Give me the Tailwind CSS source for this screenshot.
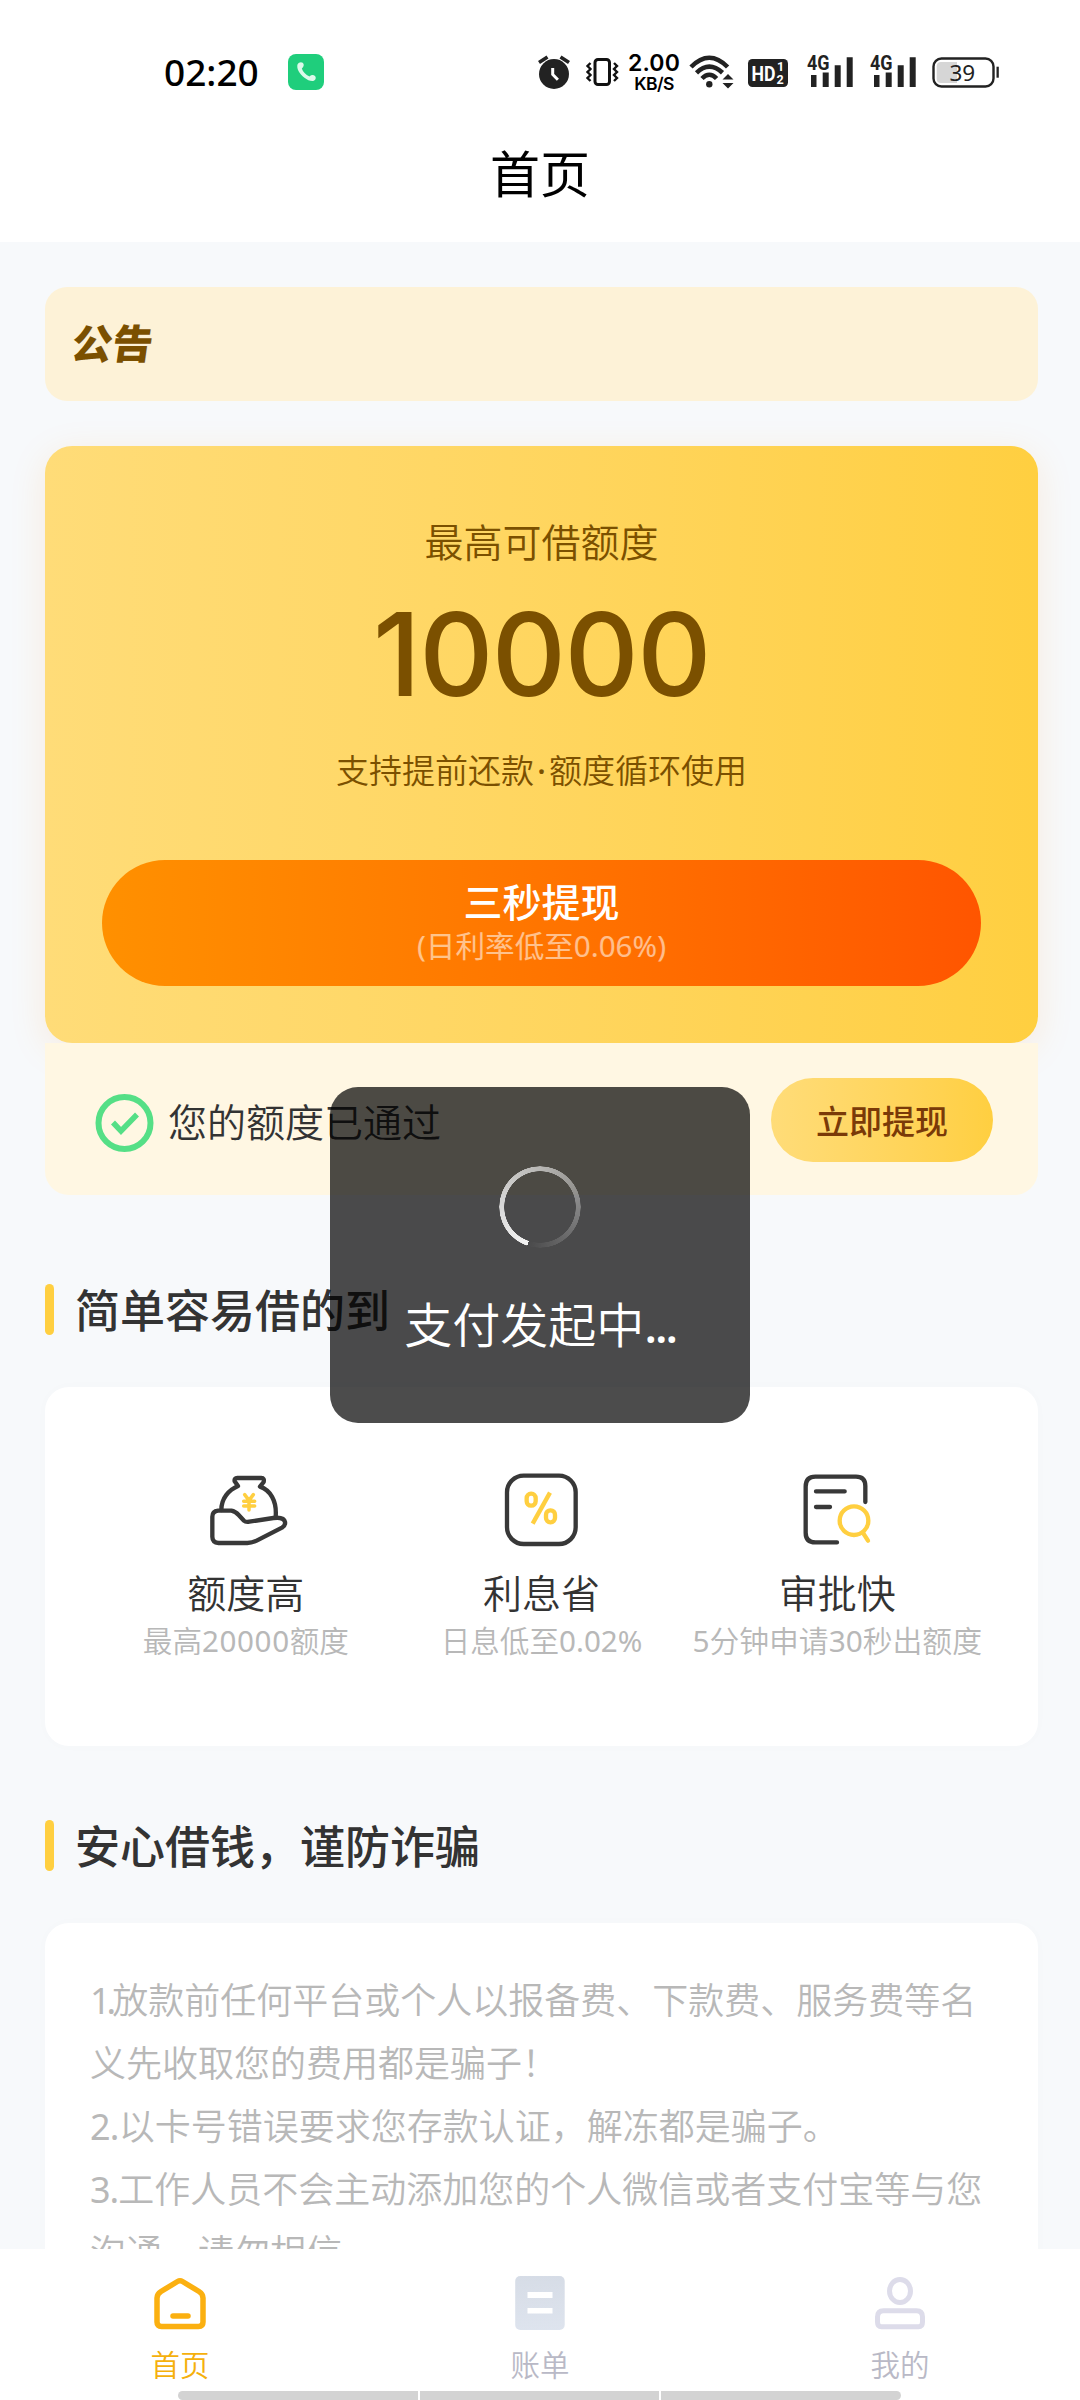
<!DOCTYPE html>
<html lang="zh-CN">
<head>
<meta charset="utf-8">
<title>首页</title>
<script src="https://cdn.jsdelivr.net/npm/@tailwindcss/browser@4"></script>
</head>
<body class="bg-[#f7f9fb]">
<div class="relative flex h-[2400px] w-[1080px] flex-col overflow-hidden bg-[#f7f9fb] font-['Noto_Sans','Noto_Sans_CJK_SC',sans-serif] font-[350] text-[#333]">

  <header class="h-[242px] shrink-0 bg-white text-black">
    <!-- status bar -->
    <div class="flex h-[144px] items-center pl-[164px]">
      <span class="mb-[2px] w-[124px] text-[37px] leading-none font-medium">02:20</span>
      <svg class="size-9" viewBox="0 0 36 36"><rect width="36" height="36" rx="8" fill="#1fce7c"/><path d="M9.500 10.500C11 7.500 15 7.300 15.700 10.500C16 12 14.800 13.500 13.800 14.500C15 18 17.500 20.500 21.500 22.500C23 20.800 25.500 20.500 27 22C28.600 23.800 27.500 26.500 25 27C20 27.500 13 22 10.500 17C9.300 14.500 9 12 9.500 10.500Z" fill="#dcf9ea"/></svg>
      <div class="ml-[212px] flex h-10 items-start text-[#222]">
        <svg class="h-10 w-9" viewBox="0 0 36 40"><circle cx="18" cy="22" r="15" fill="#222"/><path d="M3 10.500 11.500 5M24.500 5 33 10.500" stroke="#222" stroke-width="3.600" fill="none"/><path d="M16.700 16v6.500l5.200 5.300" stroke="#fff" stroke-width="3" fill="none"/></svg>
        <svg class="ml-3 h-10 w-9" viewBox="0 0 36 40" fill="none" stroke="#111"><rect x="11" y="7.500" width="14.500" height="25" rx="3" stroke-width="3"/><path d="M6.500 11 3.500 14l3 3-3 3 3 3-3 3 3 3M30 11l3 3-3 3 3 3-3 3 3 3-3 3" stroke-width="2.400"/></svg>
        <div class="ml-1.5 flex w-[56px] flex-col items-center font-[Inter] text-black">
          <span class="text-[23px] leading-[23px] font-semibold tracking-[0.2px]">2.00</span>
          <span class="text-[17.500px] leading-[17px] font-semibold tracking-[-0.6px]">KB/S</span>
        </div>
        <svg class="ml-1.5 h-10 w-[46px]" viewBox="0 0 46 40"><g fill="none" stroke="#222" stroke-width="4.600"><path d="M3 15Q21.300-3.500 39.600 15"/><path d="M8.500 20.800Q21.300 8.500 34.500 20.800"/><path d="M14 26.500Q21.300 19 28.600 26.500"/></g><circle cx="21.300" cy="32.300" r="3.200" fill="#222"/><path d="M34.500 27.500 40 22l5.500 5.500zM34.500 31 40 36.500 45.500 31z" fill="#222"/></svg>
        <svg class="ml-[13px] h-10 w-[42px]" viewBox="0 0 42 40"><rect x="1" y="7" width="40" height="28" rx="4.500" fill="#222"/><g fill="#fff" font-weight="700" font-family="Roboto"><text x="4.500" y="28.500" font-size="21" textLength="24" lengthAdjust="spacingAndGlyphs">HD</text><text x="30" y="19" font-size="12.500">1</text><text x="29.500" y="32" font-size="12.500">2</text></g></svg>
        <svg class="ml-[17px] h-10 w-12" viewBox="0 0 48 40" fill="#222"><path d="M5 23h5.500v12H5zM16.700 20.500h6V35h-6zM28.700 13.300h6V35h-6zM40.700 5.300h6V35h-6z"/><text x="1" y="18" font-size="20" font-weight="700" font-family="Roboto" textLength="22.500" lengthAdjust="spacingAndGlyphs">4G</text></svg>
        <svg class="ml-[15px] h-10 w-12" viewBox="0 0 48 40" fill="#222"><path d="M5 23h5.500v12H5zM16.700 20.500h6V35h-6zM28.700 13.300h6V35h-6zM40.700 5.300h6V35h-6z"/><text x="1" y="18" font-size="20" font-weight="700" font-family="Roboto" textLength="22.500" lengthAdjust="spacingAndGlyphs">4G</text></svg>
        <svg class="ml-3.5 h-10 w-[68px]" viewBox="0 0 68 40"><rect x="2.500" y="6.500" width="60" height="28" rx="8" fill="none" stroke="#222" stroke-width="2.400"/><path d="M10 10h16v21H10q-4.300 0-4.300-4.300V14.300Q5.700 10 10 10z" fill="#d6d6d6"/><rect x="65.500" y="14.700" width="2.300" height="11" fill="#222"/><text x="18.500" y="28.500" font-size="22.500" font-weight="400" fill="#222" font-family="Noto Sans">39</text></svg>
      </div>
    </div>
    <h1 class="flex h-[60px] items-center justify-center text-[50px] leading-none font-normal">首页</h1>
  </header>

  <main class="h-[2007px] shrink-0 overflow-hidden px-[45px] pt-[45px]">
    <section class="flex h-[114px] w-[993px] items-center rounded-[22px] bg-[#fdf2d7] pl-[27px]">
      <span class="-skew-x-8 text-[40.500px] leading-none font-black text-[#7b5000]">公告</span>
    </section>

    <section class="mt-[45px] w-[993px]">
      <div class="flex h-[597px] flex-col items-center rounded-[27px] bg-linear-to-r from-[#ffdc78] to-[#ffcf40] text-[#7b5000] shadow-[0_8px_36px_rgba(255,140,20,0.13)]">
        <p class="mt-[74px] text-[39px] leading-[44px]">最高可借额度</p>
        <p class="mt-[31px] font-[Inter] text-[115px] leading-[120px] font-medium tracking-[-1.500px]">10000</p>
        <p class="mt-[36px] text-[33px] leading-[40px]">支持提前还款<span class="mx-[3px] font-medium">·</span>额度循环使用</p>
        <button class="mt-[69px] flex h-[126px] w-[879px] flex-col items-center rounded-full bg-linear-to-r from-[#ff9000] to-[#ff5500] text-white">
          <span class="mt-[21px] text-[39px] leading-[42px] font-medium">三秒提现</span>
          <span class="mt-[3px] text-[29.600px] leading-[40px] font-normal text-white/55">(日利率低至0.06%)</span>
        </button>
      </div>
      <div class="relative flex h-[152px] items-center rounded-b-[24px] bg-[#fff7e3] pr-[45px] pl-[49px]">
        <svg class="mt-2 size-[60px]" viewBox="0 0 60 60" fill="none" stroke="#55df86"><circle cx="30.500" cy="30" r="26" stroke-width="6"/><path d="M19 29.500 27 38 43 21.500" stroke-width="5.500"/></svg>
        <span class="mt-1 ml-[14px] text-[39px] leading-none">您的额度已通过</span>
        <button class="mt-0.5 ml-auto flex h-[84px] w-[222px] items-center justify-center rounded-full bg-linear-to-r from-[#ffdc78] to-[#ffcf40] pt-[2px] text-[33px] leading-none font-medium text-[#7a3a08]">立即提现</button>
      </div>
    </section>

    <h2 class="mt-[89px] flex h-[51px] items-center gap-[21px] text-[45px] leading-none font-medium"><i class="h-[51px] w-[9px] rounded-full bg-[#ffcf40]"></i><span class="mt-px">简单容易借的到</span></h2>

    <section class="mt-[52px] flex h-[359px] w-[993px] rounded-[24px] bg-white px-[53px] pt-[83px] shadow-[0_0_14px_rgba(0,0,0,0.015)]">
      <div class="flex flex-1 flex-col items-center whitespace-nowrap">
        <svg class="h-20 w-[84px]" viewBox="222 60 252 240" fill="none" stroke="#383838" stroke-width="13" stroke-linejoin="round" stroke-linecap="round"><path d="M274 180C274 145 296 120 324 108L314 94Q312 84 322 84H394Q404 84 401 96L390 110C420 120 441 152 437 200"/><path d="M264 182H304Q316 184 326 195L342 212Q347 217 358 215L430 204Q462 200 465 216Q467 226 456 233L380 272Q366 279 352 279H266Q247 277 247 260V200Q247 184 264 182Z"/><path d="M344 134 357 151 370 134M357 151V180M341 154H374M341 168H374" stroke="#ffcf40" stroke-width="10.500"/></svg>
        <h3 class="mt-[21px] text-[39px] leading-[44px]">额度高</h3>
        <p class="mt-[6px] text-[29.600px] leading-[40px] text-[#b8b8b8]">最高<span class="font-normal tracking-[0.6px]">20000</span>额度</p>
      </div>
      <div class="flex flex-1 flex-col items-center whitespace-nowrap">
        <svg class="h-20 w-[84px]" viewBox="1109 60 252 240" fill="none"><rect x="1130" y="77" width="206" height="205" rx="50" stroke="#383838" stroke-width="13"/><g stroke="#ffcf40" stroke-width="13"><rect x="1189" y="131" width="27" height="36" rx="13"/><rect x="1247" y="181" width="27" height="36" rx="13"/><path d="M1259 128 1207 221"/></g></svg>
        <h3 class="mt-[21px] text-[39px] leading-[44px]">利息省</h3>
        <p class="mt-[6px] text-[29.600px] leading-[40px] text-[#b8b8b8]">日息低至<span class="font-normal">0.02%</span></p>
      </div>
      <div class="flex flex-1 flex-col items-center whitespace-nowrap">
        <svg class="h-20 w-[84px]" viewBox="495 60 252 240" fill="none" stroke="#383838" stroke-width="13" stroke-linecap="round"><path d="M621 277H556Q527 277 527 248V110Q527 80 556 80H678Q706 80 706 108V156M558 124H644M558 171H600"/><g stroke="#ffcf40"><circle cx="672" cy="212" r="43"/><path d="M700 250 714 272"/></g></svg>
        <h3 class="mt-[21px] text-[39px] leading-[44px]">审批快</h3>
        <p class="mt-[6px] text-[29.800px] leading-[40px] text-[#b8b8b8]"><span class="font-normal">5</span>分钟申请<span class="font-normal">30</span>秒出额度</p>
      </div>
    </section>

    <h2 class="mt-[74px] flex h-[51px] items-center gap-[21px] text-[45px] leading-none font-medium"><i class="h-[51px] w-[9px] rounded-full bg-[#ffcf40]"></i><span class="mt-px">安心借钱，谨防诈骗</span></h2>

    <section class="mt-[52px] h-[420px] w-[993px] rounded-[24px] bg-white px-[45px] pt-[46px] text-[36px] leading-[63px] whitespace-nowrap text-[#b8b8b8] shadow-[0_0_14px_rgba(0,0,0,0.015)]">
      <p><span class="font-normal tracking-[-4px]">1.</span>放款前任何平台或个人以报备费、下款费、服务费等名<br>义先收取您的费用都是骗子！</p>
      <p><span class="font-normal tracking-[-0.8px]">2.</span>以卡号错误要求您存款认证，解冻都是骗子。</p>
      <p><span class="font-normal tracking-[-1px]">3.</span>工作人员不会主动添加您的个人微信或者支付宝等与您<br>沟通，请勿相信</p>
    </section>
  </main>

  <nav class="relative grid h-[151px] grid-cols-3 bg-white text-[29.500px] leading-[40px] text-[#b9b9c6]">
    <a class="flex flex-col items-center pt-6 text-[#f5b00c]">
      <svg class="size-[60px]" viewBox="0 0 60 60" fill="none" stroke="#fbb010" stroke-width="5.500" stroke-linecap="round" stroke-linejoin="round"><path d="M27.500 8.500Q30 7 32.500 8.500L49 18.500Q53 21 53 25V49Q53 53.500 48.500 53.500H11.500Q7 53.500 7 49V25Q7 21 11 18.500Z"/><path d="M23 43H38"/></svg>
      <span class="mt-3">首页</span>
    </a>
    <a class="flex flex-col items-center pt-6">
      <svg class="size-[60px]" viewBox="0 0 60 60"><defs><linearGradient id="bill" x2="0" y2="1"><stop stop-color="#d6dce6"/><stop offset="1" stop-color="#dee4ee"/></linearGradient></defs><rect x="5.200" y="3" width="49.500" height="54" rx="5" fill="url(#bill)"/><path d="M17.500 19h25v6h-25zM17.500 35h25v5.500h-25z" fill="#fff"/></svg>
      <span class="mt-3">账单</span>
    </a>
    <a class="flex flex-col items-center pt-6">
      <svg class="size-[60px]" viewBox="0 0 60 60" fill="none" stroke="#dddcea" stroke-width="5"><ellipse cx="30" cy="18" rx="10.500" ry="11.500"/><path d="M13.500 37.700H46.500Q52.500 37.700 52.500 44V49Q52.500 53.800 48.500 53.800H11.500Q7.500 53.800 7.500 49V44Q7.500 37.700 13.500 37.700Z"/></svg>
      <span class="mt-3">我的</span>
    </a>
    <!-- system gesture handle -->
    <div class="absolute bottom-0 left-[178px] flex h-[9px] w-[723px] gap-0.5 overflow-hidden rounded-full">
      <i class="flex-1 bg-[#d3d3d3]"></i><i class="flex-1 bg-[#d3d3d3]"></i><i class="flex-1 bg-[#d3d3d3]"></i>
    </div>
  </nav>

  <!-- loading toast -->
  <div class="absolute top-[1087px] left-[330px] flex h-[336px] w-[420px] flex-col items-center rounded-[28px] bg-black/70 text-white">
    <div class="mt-[79px] size-[82px] rounded-full bg-[conic-gradient(from_198deg,#f4f4f4,#ffffff99_45%,#ffffff00)] [mask-image:radial-gradient(circle,transparent_35.500px,#000_36px,#000_40.500px,transparent_41px)]"></div>
    <p class="mt-[47px] text-[48px] leading-[60px]">支付发起中<span class="font-medium tracking-[-2.500px]">...</span></p>
  </div>
</div>
</body>
</html>
